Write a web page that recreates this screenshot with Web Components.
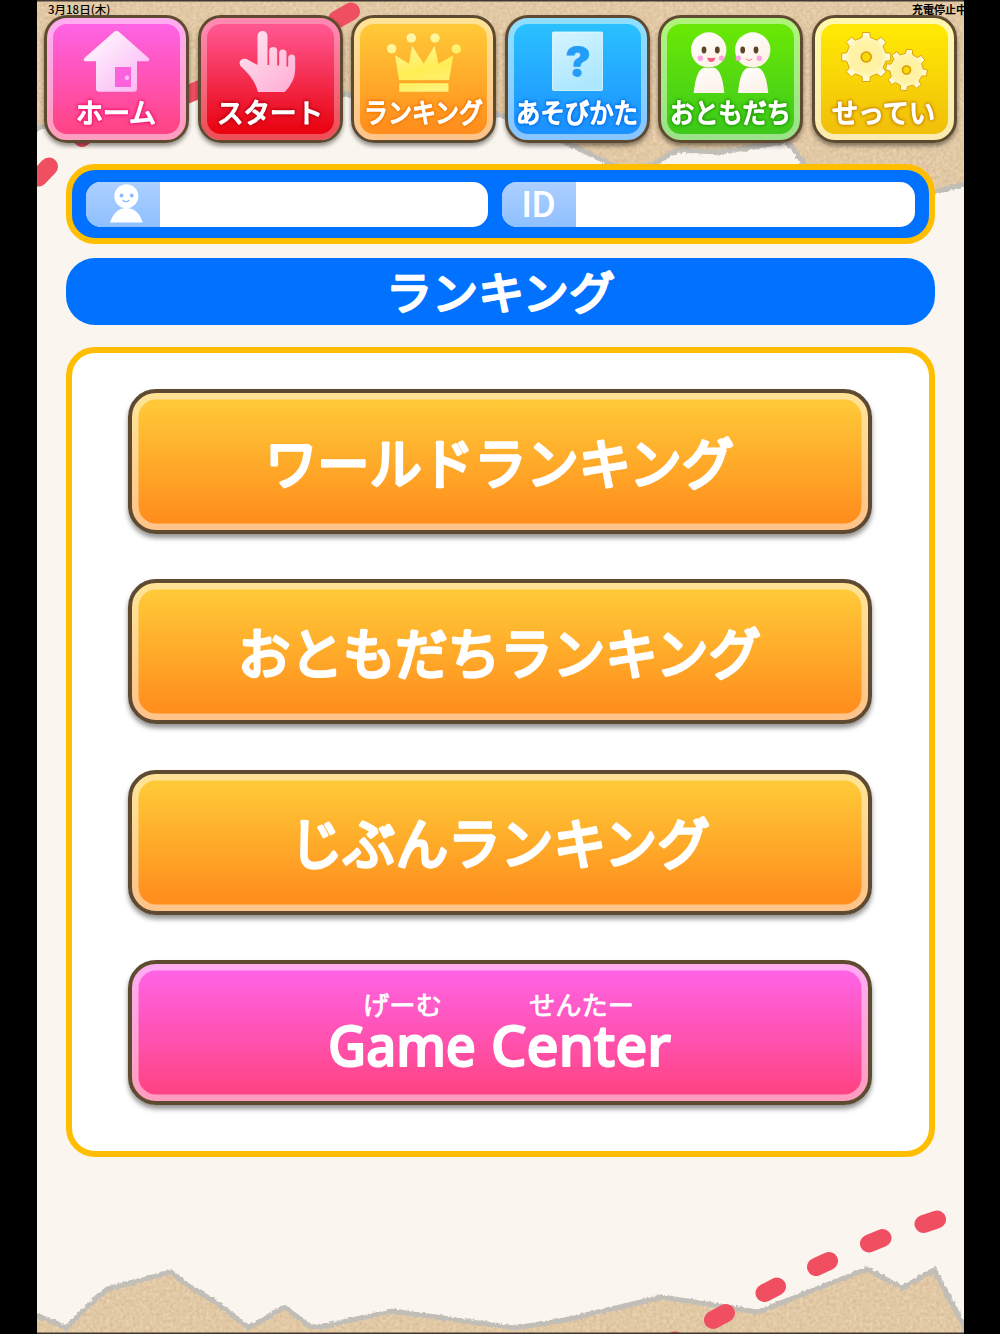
<!DOCTYPE html>
<html lang="ja">
<head>
<meta charset="utf-8">
<title>ランキング</title>
<style>
  html, body {
    margin: 0;
    background: #000;
    font-family: "Noto Sans CJK JP", sans-serif;
  }
</style>
</head>
<body>
<game-screen>
  <status-bar slot="status">
    <span>3月18日(木)</span>
    <span slot="right">充電停止中</span>
  </status-bar>
  <nav-tile slot="nav" icon="home" label="ホーム" width="80" style="--top:#ff62e2;--bottom:#ff4486;--glow:#f0146e"></nav-tile>
  <nav-tile slot="nav" icon="start" label="スタート" width="106" style="--top:#ff568f;--bottom:#e90410;--glow:#b80010;--rim:.3"></nav-tile>
  <nav-tile slot="nav" icon="ranking" label="ランキング" width="119" style="--top:#ffc837;--bottom:#ff8e1d;--glow:#f07800"></nav-tile>
  <nav-tile slot="nav" icon="help" label="あそびかた" width="122" style="--top:#2abfff;--bottom:#1c92ff;--glow:#0070e8"></nav-tile>
  <nav-tile slot="nav" icon="friends" label="おともだち" width="121" style="--top:#69e805;--bottom:#3fca1b;--glow:#1f9c00"></nav-tile>
  <nav-tile slot="nav" icon="settings" label="せってい" width="103" style="--top:#ffe904;--bottom:#f1c00a;--glow:#c98600;--rim:.68"></nav-tile>

  <profile-bar></profile-bar>
  <title-bar label="ランキング"></title-bar>
  <menu-card>
    <menu-button><round-label text="ワールドランキング" width="469"></round-label></menu-button>
    <menu-button><round-label text="おともだちランキング" width="523"></round-label></menu-button>
    <menu-button><round-label text="じぶんランキング" width="420"></round-label></menu-button>
    <menu-button kind="pink">
      <ruby-word word="Game" width="148" ruby="げーむ" ruby-width="79"></ruby-word>
      <ruby-word word="Center" width="180" ruby="せんたー" ruby-width="105"></ruby-word>
    </menu-button>
  </menu-card>
</game-screen>

<script>
// text with rounded stroke ends, fitted to a given width
function roundText ({ text, width, height, size, baseline, stroke, weight = 400, family = 'inherit' }) {
  return `
    <svg width="${width}" height="${height}" style="display:block;flex:none;overflow:visible">
      <text x="0" y="${baseline}" textLength="${width}" lengthAdjust="spacingAndGlyphs"
        font-family="${family}" font-size="${size}" font-weight="${weight}"
        fill="#fff" stroke="#fff" stroke-width="${stroke}" stroke-linejoin="round">${text}</text>
    </svg>
  `
}

// outline of a cog with square teeth
function gearPath (cx, cy, outer, inner, teeth, turn) {
  const points = []
  const step = Math.PI * 2 / teeth
  for (let i = 0; i < teeth; i++) {
    const a = i * step + turn
    const corners = [[inner, -0.27], [outer, -0.19], [outer, 0.19], [inner, 0.27]]
    corners.forEach(([r, k]) => {
      points.push(`${(cx + r * Math.cos(a + k * step)).toFixed(1)},${(cy + r * Math.sin(a + k * step)).toFixed(1)}`)
    })
  }
  return `M${points.join('L')}Z`
}

const icons = {
  home: {
    box: '53 28 127 66',
    art: `
      <defs><linearGradient id="g" x2="1" y2="1"><stop offset="0" stop-color="#fff"/><stop offset="1" stop-color="#fab0f4"/></linearGradient></defs>
      <path fill="url(#g)" d="M114.500 31.600Q116.500 30 118.500 31.600L148.500 58Q150.500 61 147.500 61.300H137V88.500Q137 91.800 133.700 91.800H99.500Q96 91.800 96 88.500V61.300H85.500Q82.500 61 84.500 58Z"/>
      <path fill="#fb62dc" d="M115 67h16v20h-16z"/>
      <circle cx="127" cy="77.700" r="2.200" fill="#fbc0f4"/>`
  },
  start: {
    box: '206.500 28 127 66',
    art: `
      <defs><linearGradient id="g" x2=".8" y2="1"><stop offset="0" stop-color="#ffeaf2"/><stop offset="1" stop-color="#ffb0d6"/></linearGradient></defs>
      <path fill="url(#g)" d="M257 65V36a5 5 0 0 1 10 0V65H268.700V51a4 4 0 0 1 8 0V65.500H278.700V52.500a3.700 3.700 0 0 1 7.300 0V66.500H287.700V58a3.500 3.500 0 0 1 7 0V70Q294.500 81 284.300 92H257.500Q254.500 79 240.500 66.500C237 62 240.500 57.500 246 59Z"/>`
  },
  ranking: {
    box: '360 28 127 66',
    art: `
      <defs><linearGradient id="g" gradientUnits="userSpaceOnUse" x1="415" y1="34" x2="430" y2="92"><stop offset="0" stop-color="#fff8ac"/><stop offset=".6" stop-color="#ffed54"/><stop offset="1" stop-color="#fff27a"/></linearGradient></defs>
      <g fill="url(#g)" stroke="#f79a10" stroke-opacity=".5" stroke-width=".6">
        <circle cx="391.700" cy="48.700" r="5"/><circle cx="411.300" cy="38" r="5"/>
        <circle cx="435" cy="38" r="5"/><circle cx="456.300" cy="49" r="5"/>
        <path d="M394.700 54.700L408.700 63.300L412 45L423.700 63.300L434.700 45L438.700 63.300L453.700 54.700L449.300 80.300H398.700Z"/>
        <path d="M399 83h49.700v8.900H399z"/>
      </g>`
  },
  help: {
    box: '513.500 28 127 66',
    art: `
      <defs><linearGradient id="g" x2=".4" y2="1"><stop offset="0" stop-color="#d6f5ff"/><stop offset="1" stop-color="#ace7ff"/></linearGradient></defs>
      <rect x="552" y="32" width="50" height="58.500" rx="1" fill="url(#g)" stroke="#e8faff" stroke-width=".8"/>
      <text x="577.300" y="77" text-anchor="middle" font-family="Inter, sans-serif" font-weight="900" font-size="43" fill="#229df8">?</text>`
  },
  friends: {
    box: '667 28 127 66',
    art: `
      <defs><linearGradient id="g" x2=".7" y2="1"><stop offset="0" stop-color="#fff"/><stop offset="1" stop-color="#fcf1e6"/></linearGradient></defs>
      <g fill="url(#g)">
        <circle cx="708.700" cy="50" r="17.700"/><circle cx="752.700" cy="50" r="17.700"/>
        <path d="M693.700 93Q696 68.500 705 67.500H713Q722 68.500 724.300 93Z"/>
        <path d="M738 93Q740 68.500 749 67.500H757Q766 68.500 768.300 93Z"/>
      </g>
      <path d="M701 66.500Q708.700 69.500 716.500 66.500M745 66.500Q752.700 69.500 760.500 66.500" fill="none" stroke="#58d40c" stroke-opacity=".55"/>
      <g fill="#5b4428">
        <ellipse cx="704" cy="50" rx="2.400" ry="3.400"/><ellipse cx="717.300" cy="50" rx="2.400" ry="3.400"/>
        <ellipse cx="742.700" cy="50" rx="2.400" ry="3.400"/><ellipse cx="756" cy="50" rx="2.400" ry="3.400"/>
      </g>
      <g fill="#ff9fe4">
        <circle cx="700.300" cy="58.300" r="2.700"/><circle cx="721.600" cy="58.300" r="2.700"/>
        <circle cx="738.300" cy="58.300" r="2.700"/><circle cx="759.300" cy="58.300" r="2.700"/>
      </g>
      <path d="M707.200 57.500Q711.300 58.500 715.400 57.500Q714.500 62 711.300 62Q708 62 707.200 57.500Z" fill="#fa5c88"/>
      <path d="M746 58.700Q749 62 752.300 58.700" fill="none" stroke="#fa6a96" stroke-width="1"/>`
  },
  settings: {
    box: '820.500 28 127 66',
    art: `
      <defs><radialGradient id="g"><stop offset="0" stop-color="#fff09a"/><stop offset=".65" stop-color="#fff3a8"/><stop offset="1" stop-color="#fffde8"/></radialGradient></defs>
      <g fill="url(#g)" stroke="#dfa40c" stroke-width="1" stroke-linejoin="round">
        <path d="${gearPath(865.7, 57, 24.8, 20, 8, 0)}"/>
        <path d="${gearPath(906, 70, 20.8, 16.6, 8, 0.15)}"/>
      </g>
      <g fill="#f9d808" stroke="#d79c08" stroke-width="1.600">
        <circle cx="865.700" cy="57" r="5"/><circle cx="906" cy="70" r="4"/>
      </g>`
  }
}

class GameScreen extends HTMLElement {
  constructor () {
    super()
    this.attachShadow({ mode: 'open' }).innerHTML = `
      <style>
        :host {
          display: grid;
          width: 927px;
          height: 1334px;
          margin: 0 auto 0 37px;
          overflow: hidden;
          background: #faf5ee;
        }
        .paper, .page {
          grid-area: 1 / 1;
        }
        .page {
          display: flex;
          flex-direction: column;
          height: 1334px;
          z-index: 1;
        }
        nav {
          display: flex;
          gap: 8.5px;
          padding-left: 7px;
        }
        main {
          display: flex;
          flex-direction: column;
          padding: 21px 29px 0;
        }
      </style>
      <svg class="paper" width="927" height="1334" viewBox="37 0 927 1334">
        <defs>
          <filter id="grain" x="0" y="0" width="1" height="1" color-interpolation-filters="sRGB">
            <feTurbulence type="fractalNoise" baseFrequency=".3" numOctaves="3" seed="4"/>
            <feColorMatrix values=".13 0 0 0 .82  .15 0 0 0 .71  .17 0 0 0 .56  0 0 0 0 1"/>
            <feComposite in2="SourceGraphic" operator="in"/>
          </filter>
          <filter id="torn" filterUnits="userSpaceOnUse" x="0" y="-20" width="1000" height="1380" color-interpolation-filters="sRGB">
            <feTurbulence type="fractalNoise" baseFrequency=".3" numOctaves="2" seed="7"/>
            <feDisplacementMap in="SourceGraphic" scale="4" xChannelSelector="R" yChannelSelector="G"/>
          </filter>
          <path id="top" d="M20 -10V138L45 125L100 105L190 98L300 90L342 93L400 108L500 115L540 130L582 150L612 165L635 172L657 162L677 150L720 152L760 146L785 141L793 148L803 163L830 195L935 192L980 180V-10Z"/>
          <path id="bottom" d="M20 1311L37 1316L52 1321L66 1328L85 1309L107 1289L171 1272L187 1285L217 1303L249 1328L284 1307L311 1327L325 1326L392 1311L450 1319L515 1328L560 1321L662 1297L720 1306L758 1312L867 1269L902 1288L934 1270L950 1300L964 1325V1345H20Z"/>
        </defs>
        <g filter="url(#grain)"><use href="#top"/><use href="#bottom"/></g>
        <g fill="none" stroke="#c1beb8" stroke-width="5" filter="url(#torn)"><use href="#top"/><use href="#bottom"/></g>
        <g stroke="#f04e61" stroke-width="18" stroke-linecap="round">
          <path d="M38.500 177.500L49 166.500M82 138L92 130M186 95L200 89M337 19.500L351 11.500"/>
          <path d="M923.500 1224L937 1219.500M869 1243.500L882.500 1238M816 1267L829 1261M764.500 1293L777 1286.500M713 1320L726 1313M665 1346L675 1340.500"/>
        </g>
        <path d="M37 .7H964M37 1333.300H964" stroke="#403733" stroke-width="1.400"/>
      </svg>
      <div class="page">
        <slot name="status"></slot>
        <nav><slot name="nav"></slot></nav>
        <main><slot></slot></main>
      </div>
    `
  }
}

class StatusBar extends HTMLElement {
  constructor () {
    super()
    this.attachShadow({ mode: 'open' }).innerHTML = `
      <style>
        :host {
          display: flex;
          height: 15px;
          padding-left: 11px;
          font-size: 11.5px;
          font-weight: 500;
          line-height: 19px;
          color: #000;
          white-space: nowrap;
        }
        .right {
          margin-left: auto;
          width: 52px;
          font-size: 11px;
          font-weight: 700;
        }
      </style>
      <slot></slot>
      <div class="right"><slot name="right"></slot></div>
    `
  }
}

class NavTile extends HTMLElement {
  constructor () {
    super()
    this.shadowDOM = this.attachShadow({ mode: 'open' })
  }

  connectedCallback () {
    const icon = icons[this.getAttribute('icon')]
    this.shadowDOM.innerHTML = `
      <style>
        :host {
          display: flex;
          flex-direction: column;
          align-items: center;
          flex: none;
          box-sizing: border-box;
          width: 145px;
          height: 128px;
          border: 3px solid #5e4a30;
          border-radius: 23px;
          padding-top: 10px;
          background: linear-gradient(var(--top) 8%, var(--bottom) 92%) padding-box;
          box-shadow: inset 0 0 0 6px rgba(255, 255, 255, var(--rim, .48)), 0 3px 4px rgba(0, 0, 0, .42);
        }
        .icon {
          flex: none;
          width: 127px;
          height: 66px;
        }
        .label {
          margin-right: 1px;
          filter: drop-shadow(0 0 1.5px var(--glow)) drop-shadow(0 0 1.5px var(--glow));
        }
      </style>
      <svg class="icon" viewBox="${icon.box}">${icon.art}</svg>
      <div class="label">
        ${roundText({ text: this.getAttribute('label'), width: this.getAttribute('width'), height: 30, size: 27, baseline: 29, stroke: 1.7 })}
      </div>
    `
  }
}

class ProfileBar extends HTMLElement {
  constructor () {
    super()
    this.attachShadow({ mode: 'open' }).innerHTML = `
      <style>
        :host {
          display: flex;
          gap: 14px;
          box-sizing: border-box;
          height: 80px;
          padding: 11.5px 14px;
          border: 6px solid #ffbe00;
          border-radius: 29px;
          background: #0072ff;
        }
        .field {
          display: flex;
          height: 45px;
          width: 401.5px;
          border-radius: 15px;
          background: #fff;
        }
        .field:last-child {
          width: 413.5px;
        }
        .tag {
          display: flex;
          align-items: center;
          justify-content: center;
          width: 74px;
          border-radius: 15px 0 0 15px;
          background: linear-gradient(#accfff, #8fc0ff);
          color: #fff;
          font: 500 36.5px/45px Roboto, sans-serif;
        }
        .tag svg {
          margin-left: 6px;
        }
      </style>
      <div class="field">
        <div class="tag">
          <svg width="36" height="45" viewBox="108 181.500 36 45">
            <g fill="#fff">
              <circle cx="126.300" cy="195.700" r="12"/>
              <path d="M110 222Q115 207.500 126.300 207.500Q138 207.500 142.700 222Z"/>
            </g>
            <circle cx="121.500" cy="195" r="1.900" fill="#8dbaff"/>
            <circle cx="131.700" cy="195" r="1.900" fill="#8dbaff"/>
            <path d="M122.500 199.500Q126 203 129.500 199.500" fill="none" stroke="#8dbaff" stroke-width="1.200"/>
          </svg>
        </div>
      </div>
      <div class="field"><div class="tag">ID</div></div>
    `
  }
}

class TitleBar extends HTMLElement {
  constructor () {
    super()
    this.shadowDOM = this.attachShadow({ mode: 'open' })
  }

  connectedCallback () {
    this.shadowDOM.innerHTML = `
      <style>
        :host {
          display: flex;
          justify-content: center;
          height: 67px;
          margin-top: 14px;
          border-radius: 29px;
          background: #0072ff;
        }
      </style>
      ${roundText({ text: this.getAttribute('label'), width: 229, height: 67, size: 45, baseline: 52, stroke: 2.6 })}
    `
  }
}

class MenuCard extends HTMLElement {
  constructor () {
    super()
    this.attachShadow({ mode: 'open' }).innerHTML = `
      <style>
        :host {
          display: flex;
          flex-direction: column;
          align-items: center;
          gap: 45.3px;
          box-sizing: border-box;
          height: 810px;
          margin-top: 22px;
          padding: 36px 2px 0 0;
          border: 6px solid #ffbe00;
          border-radius: 29px;
          background: #fff;
        }
      </style>
      <slot></slot>
    `
  }
}

class MenuButton extends HTMLElement {
  constructor () {
    super()
    this.attachShadow({ mode: 'open' }).innerHTML = `
      <style>
        :host {
          --top: #ffc837;
          --bottom: #ff8e1d;
          display: flex;
          align-items: center;
          justify-content: center;
          flex: none;
          box-sizing: border-box;
          width: 744px;
          height: 145px;
          border: 4.5px solid #5e4a30;
          border-radius: 28px;
          background: linear-gradient(var(--top) 8%, var(--bottom) 92%) padding-box;
          box-shadow: inset 0 0 0 6.5px rgba(255, 255, 255, .48), 0 4px 5px rgba(0, 0, 0, .42);
        }
        :host([kind="pink"]) {
          --top: #ff62e2;
          --bottom: #ff4486;
          gap: 15px;
        }
      </style>
      <slot></slot>
    `
  }
}

class RoundLabel extends HTMLElement {
  constructor () {
    super()
    this.shadowDOM = this.attachShadow({ mode: 'open' })
  }

  connectedCallback () {
    this.shadowDOM.innerHTML = `
      <style>
        :host {
          display: block;
        }
      </style>
      ${roundText({ text: this.getAttribute('text'), width: this.getAttribute('width'), height: 60, size: 55, baseline: 51.5, stroke: 3.3 })}
    `
  }
}

class RubyWord extends HTMLElement {
  constructor () {
    super()
    this.shadowDOM = this.attachShadow({ mode: 'open' })
  }

  connectedCallback () {
    this.shadowDOM.innerHTML = `
      <style>
        :host {
          display: flex;
          flex-direction: column;
          align-items: center;
        }
      </style>
      ${roundText({ text: this.getAttribute('ruby'), width: this.getAttribute('ruby-width'), height: 30, size: 26, baseline: 25.5, stroke: 0.8 })}
      ${roundText({ text: this.getAttribute('word'), width: this.getAttribute('width'), height: 56, size: 56, baseline: 47, stroke: 2, weight: 500, family: 'Noto Sans, sans-serif' })}
    `
  }
}

customElements.define('game-screen', GameScreen)
customElements.define('status-bar', StatusBar)
customElements.define('nav-tile', NavTile)
customElements.define('profile-bar', ProfileBar)
customElements.define('title-bar', TitleBar)
customElements.define('menu-card', MenuCard)
customElements.define('menu-button', MenuButton)
customElements.define('round-label', RoundLabel)
customElements.define('ruby-word', RubyWord)
</script>
</body>
</html>
